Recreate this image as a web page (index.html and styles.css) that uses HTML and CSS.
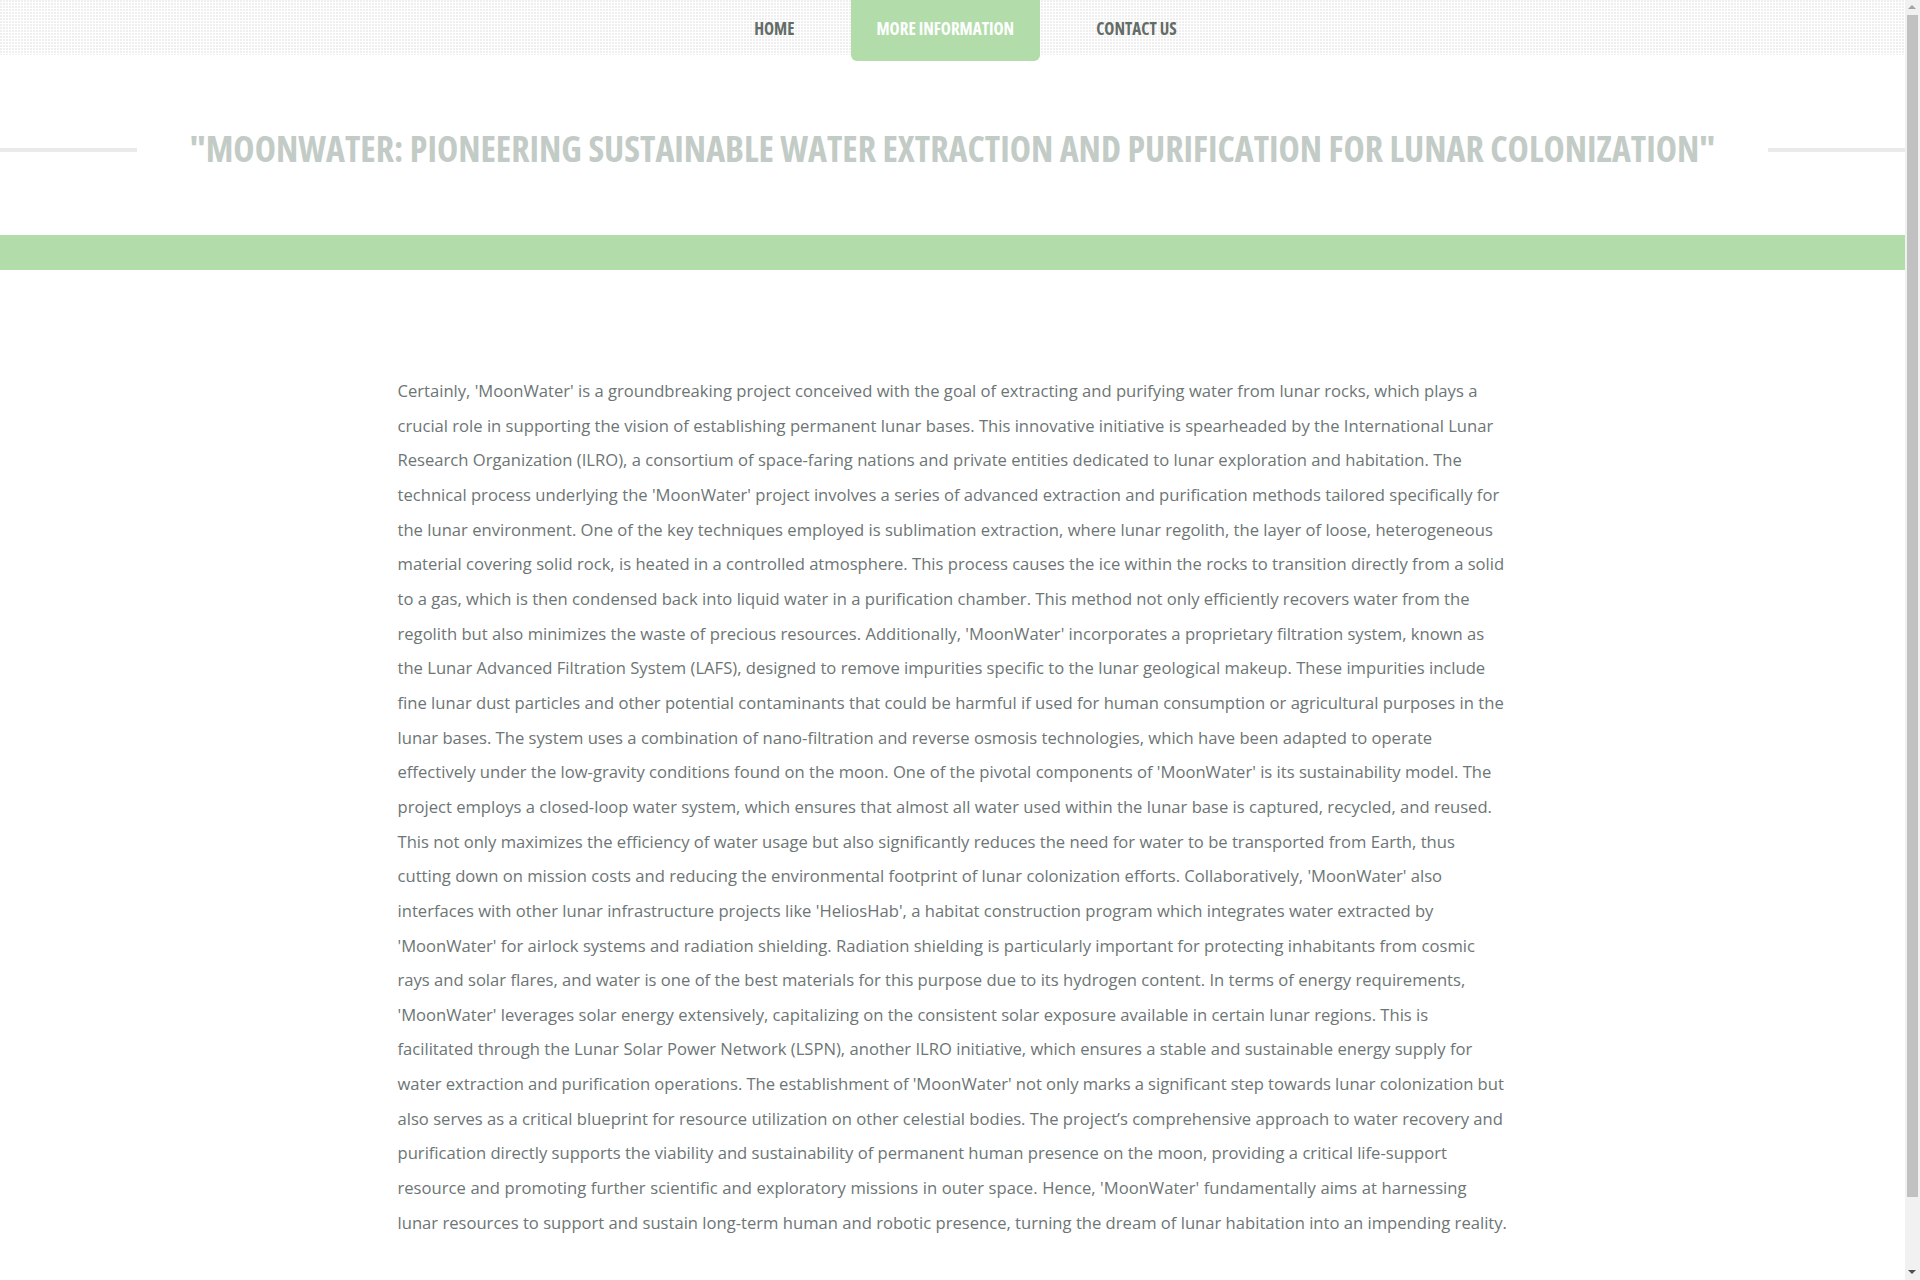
FILE: index.html
```html
<!DOCTYPE html>
<html lang="en">
<head>
<meta charset="utf-8">
<title>MoonWater</title>
<link rel="stylesheet" href="styles.css">
</head>
<body>
<div class="page">
  <nav class="topnav">
    <ul class="menu">
      <li class="menu-item"><a href="#">Home</a></li>
      <li class="menu-item active"><a href="#">More Information</a></li>
      <li class="menu-item"><a href="#">Contact Us</a></li>
    </ul>
  </nav>
  <header class="title-section">
    <span class="rule"></span>
    <h1 class="title">"MoonWater: Pioneering Sustainable Water Extraction and Purification for Lunar Colonization"</h1>
    <span class="rule"></span>
  </header>
  <div class="band"></div>
  <main class="content">
    <div class="container">
      <p class="text">Certainly, 'MoonWater' is a groundbreaking project conceived with the goal of extracting and purifying water from lunar rocks, which plays a crucial role in supporting the vision of establishing permanent lunar bases. This innovative initiative is spearheaded by the International Lunar Research Organization (ILRO), a consortium of space-faring nations and private entities dedicated to lunar exploration and habitation. The technical process underlying the 'MoonWater' project involves a series of advanced extraction and purification methods tailored specifically for the lunar environment. One of the key techniques employed is sublimation extraction, where lunar regolith, the layer of loose, heterogeneous material covering solid rock, is heated in a controlled atmosphere. This process causes the ice within the rocks to transition directly from a solid to a gas, which is then condensed back into liquid water in a purification chamber. This method not only efficiently recovers water from the regolith but also minimizes the waste of precious resources. Additionally, 'MoonWater' incorporates a proprietary filtration system, known as the Lunar Advanced Filtration System (LAFS), designed to remove impurities specific to the lunar geological makeup. These impurities include fine lunar dust particles and other potential contaminants that could be harmful if used for human consumption or agricultural purposes in the lunar bases. The system uses a combination of nano-filtration and reverse osmosis technologies, which have been adapted to operate effectively under the low-gravity conditions found on the moon. One of the pivotal components of 'MoonWater' is its sustainability model. The project employs a closed-loop water system, which ensures that almost all water used within the lunar base is captured, recycled, and reused. This not only maximizes the efficiency of water usage but also significantly reduces the need for water to be transported from Earth, thus cutting down on mission costs and reducing the environmental footprint of lunar colonization efforts. Collaboratively, 'MoonWater' also interfaces with other lunar infrastructure projects like 'HeliosHab', a habitat construction program which integrates water extracted by 'MoonWater' for airlock systems and radiation shielding. Radiation shielding is particularly important for protecting inhabitants from cosmic rays and solar flares, and water is one of the best materials for this purpose due to its hydrogen content. In terms of energy requirements, 'MoonWater' leverages solar energy extensively, capitalizing on the consistent solar exposure available in certain lunar regions. This is facilitated through the Lunar Solar Power Network (LSPN), another ILRO initiative, which ensures a stable and sustainable energy supply for <span class="tight">water extraction and purification operations. The establishment of 'MoonWater' not only marks a significant step towards lunar colonization but</span> also serves as a critical blueprint for resource utilization on other celestial bodies. The project’s comprehensive approach to water recovery and purification directly supports the viability and sustainability of permanent human presence on the moon, providing a critical life-support <span class="loose">resource and promoting further scientific and exploratory missions in outer space. Hence, 'MoonWater' fundamentally aims at harnessing lunar</span> resources to support and sustain long-term human and robotic presence, turning the dream of lunar habitation into an impending reality.</p>
    </div>
  </main>
</div>
<div class="scrollbar" aria-hidden="true">
  <div class="sb-btn sb-up"></div>
  <div class="sb-track"><div class="sb-thumb"></div></div>
  <div class="sb-btn sb-down"></div>
</div>
</body>
</html>
```
FILE: styles.css
```css
html, body {
  margin: 0;
  padding: 0;
  background: #ffffff;
}

body {
  font-family: "Open Sans", "Liberation Sans", sans-serif;
}

.page {
  margin-right: 15px;
}

.topnav {
  height: 55px;
  background-color: #efefef;
  background-image:
    repeating-linear-gradient(to right, transparent 0, transparent 2px, #ffffff 2px, #ffffff 3px),
    repeating-linear-gradient(to bottom, transparent 0, transparent 2px, #ffffff 2px, #ffffff 3px);
  position: relative;
  z-index: 2;
}

.menu {
  list-style: none;
  margin: 0;
  padding: 0 0 0 26px;
  display: flex;
  justify-content: center;
}

.menu-item {
  margin: 0 15px;
}

.menu-item a {
  display: block;
  height: 61px;
  line-height: 57px;
  padding: 0 26px;
  font-family: "Open Sans", "DejaVu Sans Condensed", sans-serif;
  font-stretch: 75%;
  font-weight: 700;
  font-size: 17px;
  text-transform: uppercase;
  text-decoration: none;
  color: #646c68;
  border-radius: 0 0 6px 6px;
}

.menu-item.active a {
  background: #b2ddab;
  color: #ffffff;
}

.title-section {
  display: flex;
  align-items: center;
  gap: 53px;
  padding: 69px 0 61px;
}

.rule {
  flex: 1;
  height: 4px;
  margin-top: 2px;
  background: #e9eaea;
}

.title {
  margin: 0;
  font-family: "Open Sans", "DejaVu Sans Condensed", sans-serif;
  font-stretch: 75%;
  font-weight: 700;
  font-size: 35.9px;
  line-height: 50px;
  color: #c2cbc5;
  text-transform: uppercase;
  white-space: nowrap;
}

.band {
  height: 35px;
  background: #b2ddab;
}

.content {
  padding: 104px 0 114px;
}

.container {
  width: 1110px;
  margin: 0 auto;
}

.text {
  margin: 0;
  font-size: 16.61px;
  line-height: 34.65px;
  color: #6d7575;
}

.tight {
  word-spacing: -0.25px;
}

.loose {
  word-spacing: 0.3px;
}

.scrollbar {
  position: fixed;
  top: 0;
  right: 0;
  width: 15px;
  height: 100vh;
  background: #f1f1f1;
  display: flex;
  flex-direction: column;
  z-index: 10;
}

.sb-btn {
  height: 15px;
  flex: none;
  position: relative;
}

.sb-btn::after {
  content: "";
  position: absolute;
  left: 3px;
  width: 0;
  height: 0;
  border-left: 4.5px solid transparent;
  border-right: 4.5px solid transparent;
}

.sb-up::after {
  top: 5px;
  border-bottom: 4.5px solid #a3a3a3;
}

.sb-down::after {
  top: 5px;
  border-top: 4.5px solid #505050;
}

.sb-track {
  flex: 1;
  padding: 0 2px;
}

.sb-thumb {
  height: 1182px;
  background: #c1c1c1;
}
```
